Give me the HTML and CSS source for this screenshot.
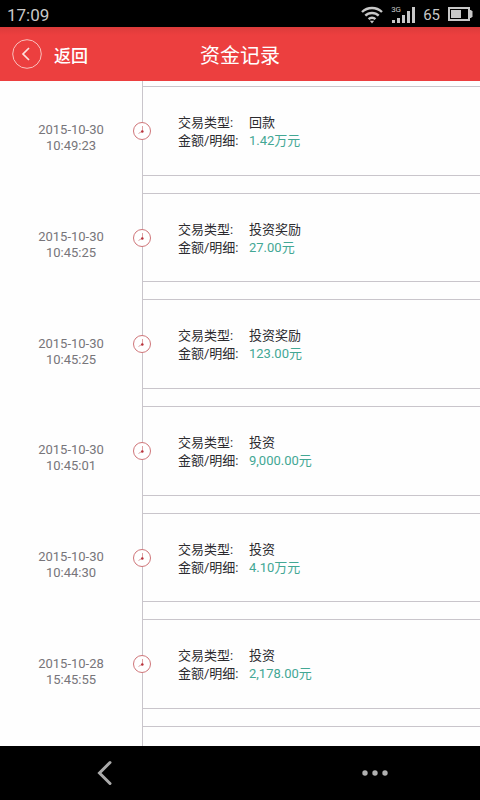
FILE: index.html
```
<!DOCTYPE html>
<html lang="zh-CN">

<head>
    <meta charset="UTF-8">
    <meta name="viewport" content="width=device-width, initial-scale=1.0">
    <title>资金记录</title>
    <link rel="stylesheet" href="styles.css">
</head>

<body>
    <svg class="sprite" aria-hidden="true">
        <symbol id="clock" viewBox="0 0 20 20">
            <circle cx="10" cy="10" r="8.500" fill="#fff" stroke="#cf7579" stroke-width="1"/>
            <path d="M10.500 5v5l-4 2.500" fill="none" stroke="#dfa0a3" stroke-width="1"/>
            <circle cx="10.300" cy="10.500" r="1.300" fill="#b8323b"/>
        </symbol>
    </svg>

    <div class="status-bar">
        <span class="time">17:09</span>
        <div class="status-icons">
            <svg class="wifi" width="22" height="18" viewBox="0 0 22 18" fill="none" stroke="#c8c8c8" stroke-width="2.400">
                <path d="M1 6a14.500 14.500 0 0 1 20 0"/>
                <path d="M4.300 9.700a9.500 9.500 0 0 1 13.400 0"/>
                <path d="M7.600 13.200a4.800 4.800 0 0 1 6.800 0"/>
                <path d="M8.800 14.800h4.400l-2.200 2.700z" fill="#c8c8c8" stroke="none"/>
            </svg>
            <div class="signal">
                <span class="network">3G</span>
                <svg width="24" height="18" viewBox="0 0 24 18" fill="#c8c8c8">
                    <path d="M1 14h3v3h-3zM6 12h3v5h-3zM11 9h3v8h-3zM16 5h3v12h-3zM21 1h3v16h-3z"/>
                </svg>
            </div>
            <span class="level">65</span>
            <svg class="battery" width="25" height="16" viewBox="0 0 25 16">
                <path d="M1 1h20v12h-20z" fill="none" stroke="#c8c8c8" stroke-width="2"/>
                <path d="M21 3h2l1.500 1.500v5l-1.500 1.500h-2z" fill="#c8c8c8"/>
                <rect x="3" y="3" width="10" height="8" fill="#c8c8c8"/>
            </svg>
        </div>
    </div>

    <header class="header">
        <button class="back" type="button">
            <svg width="30" height="30" viewBox="0 0 30 30" fill="none" stroke="#fff">
                <circle cx="15" cy="15" r="14.300" stroke="#f9c0bd" stroke-width="1"/>
                <path d="M17 9l-6 6 6 6" stroke="#fde0de" stroke-width="1.700"/>
            </svg>
            返回
        </button>
        <h1 class="title">资金记录</h1>
    </header>

    <main class="records">
        <div class="edge edge-top"></div>
        <section class="record">
            <div class="date">2015-10-30<br>10:49:23</div>
            <div class="line">
                <svg class="clock"><use href="#clock"/></svg>
                <dl class="card">
                    <dt>交易类型:</dt><dd>回款</dd>
                    <dt>金额/明细:</dt><dd class="money">1.42万元</dd>
                </dl>
            </div>
        </section>
        <section class="record">
            <div class="date">2015-10-30<br>10:45:25</div>
            <div class="line">
                <svg class="clock"><use href="#clock"/></svg>
                <dl class="card">
                    <dt>交易类型:</dt><dd>投资奖励</dd>
                    <dt>金额/明细:</dt><dd class="money">27.00元</dd>
                </dl>
            </div>
        </section>
        <section class="record">
            <div class="date">2015-10-30<br>10:45:25</div>
            <div class="line">
                <svg class="clock"><use href="#clock"/></svg>
                <dl class="card">
                    <dt>交易类型:</dt><dd>投资奖励</dd>
                    <dt>金额/明细:</dt><dd class="money">123.00元</dd>
                </dl>
            </div>
        </section>
        <section class="record">
            <div class="date">2015-10-30<br>10:45:01</div>
            <div class="line">
                <svg class="clock"><use href="#clock"/></svg>
                <dl class="card">
                    <dt>交易类型:</dt><dd>投资</dd>
                    <dt>金额/明细:</dt><dd class="money">9,000.00元</dd>
                </dl>
            </div>
        </section>
        <section class="record">
            <div class="date">2015-10-30<br>10:44:30</div>
            <div class="line">
                <svg class="clock"><use href="#clock"/></svg>
                <dl class="card">
                    <dt>交易类型:</dt><dd>投资</dd>
                    <dt>金额/明细:</dt><dd class="money">4.10万元</dd>
                </dl>
            </div>
        </section>
        <section class="record">
            <div class="date">2015-10-28<br>15:45:55</div>
            <div class="line">
                <svg class="clock"><use href="#clock"/></svg>
                <dl class="card">
                    <dt>交易类型:</dt><dd>投资</dd>
                    <dt>金额/明细:</dt><dd class="money">2,178.00元</dd>
                </dl>
            </div>
        </section>
        <div class="edge edge-bottom"></div>
    </main>

    <nav class="nav-bar">
        <button type="button" aria-label="返回">
            <svg width="16" height="26" viewBox="0 0 16 26" fill="none" stroke="#aaa" stroke-width="3" stroke-linecap="round">
                <path d="M13 2.500l-10.500 10.500 10.500 10.500"/>
            </svg>
        </button>
        <button type="button" aria-label="更多">
            <svg width="26" height="6" viewBox="0 0 26 6" fill="#b0b0b0">
                <circle cx="3" cy="3" r="2.700"/>
                <circle cx="13" cy="3" r="2.700"/>
                <circle cx="23" cy="3" r="2.700"/>
            </svg>
        </button>
    </nav>
</body>

</html>
```

FILE: styles.css
```
* {
    box-sizing: border-box;
}
body {
    margin: 0;
    min-height: 100vh;
    display: flex;
    flex-direction: column;
    background-color: #fefefe;
    font-family: Roboto, "Noto Sans CJK SC", sans-serif;
    font-size: 13px;
}
button {
    padding: 0;
    border: none;
    background: none;
    color: inherit;
    font-family: inherit;
    cursor: pointer;
}
svg {
    display: block;
}
.sprite {
    position: absolute;
    width: 0;
    height: 0;
}

/* status bar */
.status-bar {
    display: flex;
    align-items: center;
    justify-content: space-between;
    height: 27px;
    padding: 2px 7px 0;
    background-color: #000;
    color: #c8c8c8;
}
.time {
    font-size: 17px;
}
.status-icons {
    display: flex;
    align-items: center;
}
.signal {
    position: relative;
    margin: 0 8px;
}
.network {
    position: absolute;
    top: 0;
    left: 0;
    font-size: 8px;
    line-height: 8px;
}
.level {
    margin-right: 8px;
    font-size: 15px;
}

/* header */
.header {
    display: grid;
    grid-template-columns: 1fr auto 1fr;
    align-items: center;
    height: 54px;
    padding: 0 12px;
    background: linear-gradient(#dc3b3a, #ec3f3f 8px);
    color: #fff;
}
.back {
    display: flex;
    align-items: center;
    gap: 12px;
    font-size: 17px;
    font-weight: 500;
}
.title {
    margin: 0;
    font-size: 20px;
    font-weight: 400;
}

/* records */
.records {
    flex: 1;
    display: flex;
    flex-direction: column;
}
.edge {
    margin-left: 142px;
    border-left: 1px solid #c9c5cb;
}
.edge-top {
    height: 5px;
}
.edge-bottom {
    height: 20px;
    border-top: 1px solid #c9c5cb;
}
.record {
    flex: 1 0 auto;
    display: flex;
}
.date {
    width: 142px;
    padding-bottom: 2px;
    align-self: center;
    text-align: center;
    line-height: 16px;
    color: #77757a;
}
.line {
    position: relative;
    flex: 1;
    display: flex;
    padding-bottom: 17px;
    border-left: 1px solid #c9c5cb;
}
.clock {
    position: absolute;
    top: 35px;
    left: -11px;
    width: 20px;
    height: 20px;
}
.card {
    flex: 1;
    display: grid;
    grid-template-columns: 71px 1fr;
    align-content: center;
    margin: 0;
    padding: 20px 16px 18px 35px;
    border-top: 1px solid #c9c5cb;
    border-bottom: 1px solid #c9c5cb;
    line-height: 18px;
    color: #2b2a2e;
}
.card dd {
    margin: 0;
}
.card .money {
    color: #43a794;
}

/* bottom navigation */
.nav-bar {
    display: flex;
    align-items: center;
    justify-content: space-between;
    height: 54px;
    padding: 0 92px 0 97px;
    background-color: #000;
}
```
